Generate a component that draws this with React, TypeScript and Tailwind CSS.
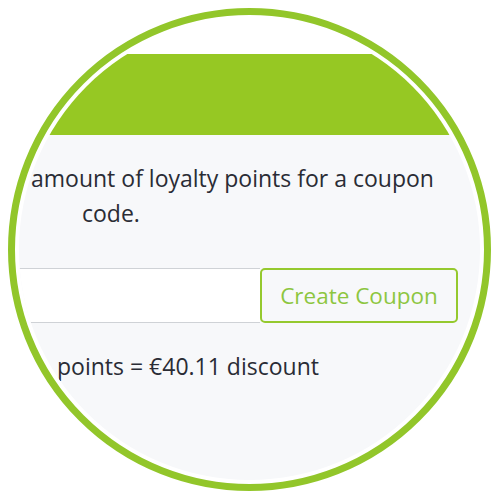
export default function App() {
  return (
    <div className="w-[500px] h-[500px] bg-white p-[8px]">
      <div className="w-[483px] h-[483px] rounded-full border-[7px] border-[#92c62a] bg-white p-[4px]">
        <div className="w-full h-full rounded-full overflow-hidden flex flex-col bg-white font-['Open_Sans',sans-serif]">
          <div className="h-[35px] shrink-0 bg-white" />
          <div className="h-[81px] shrink-0 bg-[#96c823]" />
          <div className="flex-1 bg-[#f7f8fa] pt-[26px] text-[23px] leading-[35px] text-[#2a2c35]">
            <p className="pl-[12px] whitespace-nowrap">amount of loyalty points for a coupon</p>
            <p className="pl-[63px]">code.</p>
            <div className="mt-[37px] flex h-[55px]">
              <input
                type="text"
                className="w-[241px] h-full bg-white border-y border-[#cfd2d6] focus:outline-none"
              />
              <button className="w-[198px] h-full border-2 border-[#95c92e] rounded-[5px] text-[22.5px] text-[#8dc63f]">
                Create Coupon
              </button>
            </div>
            <p className="mt-[26px] pl-[38px] whitespace-nowrap">points = €40.11 discount</p>
          </div>
        </div>
      </div>
    </div>
  );
}
